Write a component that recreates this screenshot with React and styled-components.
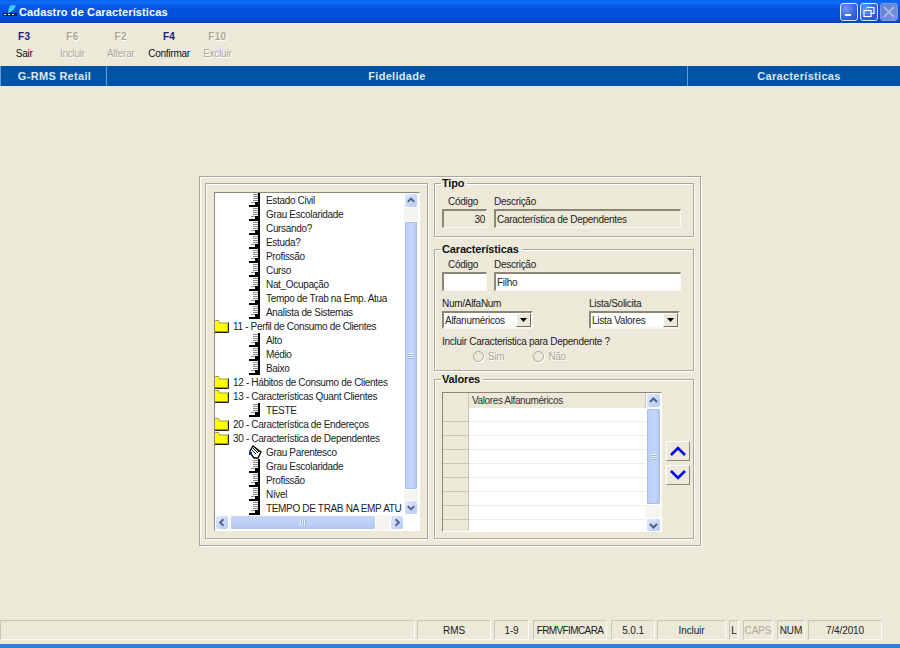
import styled, { createGlobalStyle } from 'styled-components';

const GlobalStyle = createGlobalStyle`
  html, body { margin: 0; padding: 0; height: 100%; overflow: hidden; }
  body { background: #ece9d8; font-family: "Liberation Sans", Arial, sans-serif; font-size: 10px; letter-spacing: -0.28px; color: #222; }
`;

const Window = styled.div`
  width: 900px;
  height: 648px;
  display: flex;
  flex-direction: column;
  background: #ece9d8;
`;

const TitleBar = styled.header`
  height: 23px;
  flex: none;
  display: flex;
  align-items: center;
  padding: 0 2px 0 3px;
  border-bottom: 1px solid #f4f2e8;
  background: linear-gradient(180deg, #0a5fe8 0%, #0f6cf5 10%, #0453e0 35%, #0350dc 70%, #0244c4 100%);
`;

const AppIcon = styled.svg`
  width: 14px;
  height: 14px;
  flex: none;
`;

const TitleText = styled.span`
  margin-left: 2px;
  flex: 1;
  color: #fff;
  font-size: 11px;
  font-weight: bold;
  letter-spacing: 0.12px;
`;

const WinButton = styled.button`
  width: 18px;
  height: 18px;
  padding: 0;
  margin-left: 2px;
  display: flex;
  align-items: center;
  justify-content: center;
  border: 1px solid ${(p) => (p.$off ? '#7f9be6' : '#dfe8fb')};
  border-radius: 3px;
  background: ${(p) => (p.$off
    ? 'linear-gradient(135deg, #5a7fdc, #7a93dc)'
    : 'radial-gradient(circle at 30% 30%, #6f97f0, #2a56d8 75%)')};
`;

const Toolbar = styled.nav`
  height: 42px;
  flex: none;
  display: flex;
  align-items: flex-start;
  padding-top: 7px;
  box-sizing: border-box;
`;

const ToolButton = styled.div`
  width: 48.3px;
  display: flex;
  flex-direction: column;
  align-items: center;
  gap: 5px;
  color: ${(p) => (p.$off ? '#aca899' : '#111')};
  text-shadow: ${(p) => (p.$off ? '1px 1px 0 #fff' : 'none')};
`;

const ToolKey = styled.span`
  font-size: 10px;
  line-height: 12px;
  font-weight: bold;
  letter-spacing: 0.3px;
  color: ${(p) => (p.$off ? '#aca899' : '#1c1c7c')};
`;

const ToolLabel = styled.span`
  font-size: 10px;
  line-height: 12px;
  white-space: nowrap;
  letter-spacing: -0.25px;
`;

const ModuleBand = styled.div`
  height: 20px;
  flex: none;
  display: flex;
  background: #0054a6;
  color: #dfe6ee;
  font-size: 11px;
  font-weight: bold;
  letter-spacing: 0.3px;
`;

const ModuleCell = styled.div`
  width: ${(p) => p.$w}px;
  box-sizing: border-box;
  display: flex;
  align-items: center;
  justify-content: center;
  padding-left: ${(p) => p.$pl || 0}px;
  border-left: ${(p) => (p.$first ? '1px solid #5f9ce0' : 'none')};
  border-right: ${(p) => (p.$last ? 'none' : '1px solid #5f9ce0')};
`;

const Main = styled.main`
  flex: 1;
  display: flex;
  justify-content: center;
  align-items: flex-start;
  padding-top: 90px;
`;

const Panel = styled.section`
  width: 502px;
  height: 370px;
  box-sizing: border-box;
  display: flex;
  gap: 6px;
  padding: 0 6px 0 5px;
  border: 1px solid #aca899;
  box-shadow: inset 1px 1px 0 #fff, 1px 1px 0 #fff;
`;

const TreeGroup = styled.div`
  width: 223px;
  height: 356px;
  margin-top: 6px;
  box-sizing: border-box;
  padding: 8px 8px 7px 8px;
  border: 1px solid #aca899;
  box-shadow: inset 1px 1px 0 #fff, 1px 1px 0 #fff;
`;

const TreeBox = styled.div`
  width: 206px;
  height: 339px;
  box-sizing: border-box;
  display: grid;
  grid-template-columns: 1fr 14px;
  grid-template-rows: 1fr 15px;
  background: #fff;
  border: 1px solid;
  border-color: #8a8776 #fff #fff #8a8776;
  padding-right: 1px;
`;

const TreeRows = styled.ul`
  list-style: none;
  margin: 0;
  padding: 0;
  overflow: hidden;
  min-width: 0;
`;

const TreeRow = styled.li`
  height: 14px;
  display: flex;
  align-items: center;
  padding-left: ${(p) => (p.$leaf ? 34 : 0)}px;
  white-space: nowrap;
  font-size: 10px;
  letter-spacing: -0.33px;
  color: #222;
`;

const TreeIcon = styled.svg`
  flex: none;
  width: ${(p) => (p.$folder ? 15 : 13)}px;
  height: 14px;
  margin-left: ${(p) => (p.$folder ? -1 : 0)}px;
  margin-right: 4px;
`;

const VScroll = styled.div`
  display: flex;
  flex-direction: column;
  background: #f5f5ef;
  min-height: 0;
`;

const ScrollSpacer = styled.div`
  height: ${(p) => p.$h}px;
  flex: none;
`;

const ScrollThumbV = styled.div`
  flex: ${(p) => (p.$h ? 'none' : 1)};
  height: ${(p) => (p.$h ? `${p.$h}px` : 'auto')};
  display: flex;
  align-items: center;
  justify-content: center;
  border: 1px solid #fff;
  border-radius: 2px;
  background: linear-gradient(90deg, #b9cdf6, #c6d6fa 60%, #aec3ef);
  box-shadow: 0 0 0 1px #a9bfee inset;
`;

const Grip = styled.span`
  width: 6px;
  height: 6px;
  background: repeating-linear-gradient(
    ${(p) => (p.$horizontal ? '90deg' : '180deg')},
    #eef3ff 0 1px,
    #9db4e6 1px 2px
  );
`;

const ScrollBtn = styled.div`
  flex: none;
  width: ${(p) => (p.$w ? `${p.$w}px` : '100%')};
  height: 15px;
  box-sizing: border-box;
  display: flex;
  align-items: center;
  justify-content: center;
  border: 1px solid #fff;
  border-radius: 3px;
  background: linear-gradient(135deg, #dfe8fd, #b7caf4);
`;

const Corner = styled.div`
  background: #fff;
`;

const HScroll = styled.div`
  display: flex;
  align-items: stretch;
  background: #f5f5ef;
  height: 15px;
`;

const ScrollThumbH = styled.div`
  width: 144px;
  margin-left: 1px;
  display: flex;
  align-items: center;
  justify-content: center;
  border: 1px solid #fff;
  border-radius: 2px;
  background: linear-gradient(180deg, #c6d6fa, #b9cdf6 70%, #aec3ef);
`;

const HGap = styled.div`
  flex: 1;
`;

const FormColumn = styled.div`
  width: 260px;
  display: flex;
  flex-direction: column;
`;

const Group = styled.fieldset`
  margin: 0 0 ${(p) => p.$mb || 0}px 0;
  height: ${(p) => p.$h}px;
  box-sizing: border-box;
  min-width: 0;
  padding: 0 7px;
  border: 1px solid #aca899;
  box-shadow: inset 1px 1px 0 #fff, 1px 1px 0 #fff;
`;

const GroupTitle = styled.legend`
  margin-left: -1px;
  padding: 0 3px 0 1px;
  font-size: 11px;
  line-height: 12px;
  font-weight: bold;
  color: #111;
  letter-spacing: -0.15px;
`;

const FieldRow = styled.div`
  display: flex;
  gap: ${(p) => p.$gap || 7}px;
  margin-top: ${(p) => p.$mt || 0}px;
`;

const Field = styled.label`
  width: ${(p) => p.$w}px;
  display: flex;
  flex-direction: column;
  flex: none;
`;

const FieldLabel = styled.span`
  height: 13px;
  line-height: 13px;
  padding-left: ${(p) => p.$pl || 0}px;
  font-size: 10px;
  margin-bottom: 1px;
  white-space: nowrap;
`;

const TextBox = styled.div`
  height: 19px;
  box-sizing: border-box;
  padding: 0 1px;
  display: flex;
  align-items: center;
  justify-content: ${(p) => (p.$right ? 'flex-end' : 'flex-start')};
  font-size: 10px;
  white-space: nowrap;
  border: 2px solid;
  border-right-width: 1px;
  border-bottom-width: 1px;
  border-color: #8a8776 #f8f7f0 #f8f7f0 #8a8776;
  background: ${(p) => (p.$readonly ? '#ece9d8' : '#fff')};
`;

const Combo = styled.div`
  height: 18px;
  box-sizing: border-box;
  display: flex;
  align-items: center;
  justify-content: space-between;
  padding-left: 1px;
  border: 2px solid;
  border-color: #8a8776 #f8f7f0 #f8f7f0 #8a8776;
  background: #fff;
  font-size: 10px;
`;

const ComboArrow = styled.span`
  width: 15px;
  height: 14px;
  display: flex;
  align-items: center;
  justify-content: center;
  background: #ece9d8;
  border: 1px solid;
  border-color: #fff #716f64 #716f64 #fff;
  box-sizing: border-box;
`;

const Question = styled.div`
  margin-top: 6px;
  height: 13px;
  line-height: 13px;
  font-size: 10px;
`;

const RadioRow = styled.div`
  display: flex;
  margin-top: 3px;
  padding-left: 31px;
  gap: 29px;
`;

const RadioItem = styled.span`
  display: flex;
  align-items: center;
  gap: 4px;
  color: #aca899;
  text-shadow: 1px 1px 0 #fff;
  font-size: 10px;
`;

const RadioDot = styled.span`
  width: 9px;
  height: 9px;
  border-radius: 50%;
  border: 1px solid #aca899;
  background: #ece9d8;
  box-shadow: 1px 1px 0 #fff;
`;

const ValuesRow = styled.div`
  display: flex;
  gap: 4px;
  margin-top: 7px;
`;

const ValuesGrid = styled.div`
  flex: none;
  width: 220px;
  height: 140px;
  box-sizing: border-box;
  display: grid;
  grid-template-columns: 1fr 15px;
  border: 1px solid;
  border-color: #8a8776 #fff #fff #8a8776;
  background: #fff;
  overflow: hidden;
`;

const GridTable = styled.div`
  display: flex;
  flex-direction: column;
  overflow: hidden;
`;

const GridRow = styled.div`
  display: grid;
  grid-template-columns: 26px 1fr;
  height: ${(p) => (p.$head ? 15 : 14)}px;
  flex: none;
`;

const HeadCell = styled.div`
  box-sizing: border-box;
  background: #ece9d8;
  border-bottom: 1px solid #c9c6b4;
  border-right: 1px solid #c9c6b4;
  padding-left: 3px;
  line-height: 15px;
  font-size: 10px;
  letter-spacing: -0.38px;
  white-space: nowrap;
  color: #333;
`;

const BodyCell = styled.div`
  box-sizing: border-box;
  background: #fff;
  border-bottom: 1px solid #efeee6;
`;

const MoveButtons = styled.div`
  flex: none;
  display: flex;
  flex-direction: column;
  gap: 4px;
  padding-top: 49px;
`;

const MoveButton = styled.div`
  width: 24px;
  height: 20px;
  box-sizing: border-box;
  display: flex;
  align-items: center;
  justify-content: center;
  border: 1px solid;
  border-color: #fff #8a8776 #8a8776 #fff;
  background: #ece9d8;
`;

const StatusBar = styled.footer`
  height: 20px;
  flex: none;
  display: flex;
  gap: 2px;
  margin-bottom: 4px;
`;

const StatusCell = styled.div`
  width: ${(p) => p.$w}px;
  margin-left: ${(p) => p.$ml || 0}px;
  box-sizing: border-box;
  display: flex;
  align-items: center;
  justify-content: center;
  font-size: 10px;
  letter-spacing: ${(p) => (p.$tight ? -0.6 : -0.1)}px;
  white-space: nowrap;
  color: ${(p) => (p.$off ? '#aca899' : '#222')};
  border: 1px solid;
  border-color: #c9c6b4 #fbfaf4 #fbfaf4 #c9c6b4;
`;

const BottomEdge = styled.div`
  height: 4px;
  flex: none;
  background: #2f7fe2;
`;

const LeafIcon = () => (
  <TreeIcon viewBox="0 0 13 14">
    <path d="M9 0h2v14H9z" fill="#000" />
    <path d="M0 12h11v2H0z" fill="#000" />
    <path d="M4 1.5h5M4 3.5h5M4 5.5h5M4 7.5h5" stroke="#8a8a8a" strokeWidth="1" fill="none" />
    <path d="M6 9h3v3H6z" fill="#000" />
    <path d="M2 9.5h4" stroke="#8a8a8a" strokeWidth="1" fill="none" />
  </TreeIcon>
);

const HandIcon = () => (
  <TreeIcon viewBox="0 0 13 14">
    <path d="M1 6l3-5 8 6-3 6H5L2 9z" fill="#fff" stroke="#000" strokeWidth="1.3" />
    <path d="M4 3l5 5M3 5l4 4M6 2l4 5" stroke="#000" strokeWidth="1" fill="none" />
    <path d="M0 7h3v3H0z" fill="#0a2fb0" />
  </TreeIcon>
);

const FolderIcon = () => (
  <TreeIcon $folder viewBox="0 0 15 14">
    <path d="M0.5 4V2.5l1-1h3l1 2.5h8.5v8.5H0.5z" fill="#ffff00" stroke="#9a9a30" strokeWidth="1" />
    <path d="M14.5 3.5v10H1" fill="none" stroke="#222" strokeWidth="1" />
  </TreeIcon>
);

const Chevron = ({ dir }) => {
  const paths = {
    up: 'M3 8l3.5-3.5L10 8',
    down: 'M3 5l3.5 3.5L10 5',
    left: 'M8 3L4.5 6.5 8 10',
    right: 'M5 3l3.5 3.5L5 10',
  };
  return (
    <svg width="13" height="13" viewBox="0 0 13 13">
      <path d={paths[dir]} fill="none" stroke="#4d6185" strokeWidth="2" />
    </svg>
  );
};

const ComboCaret = () => (
  <svg width="7" height="4" viewBox="0 0 7 4"><path d="M0 0h7L3.5 4z" fill="#000" /></svg>
);

const BlueArrow = ({ down }) => (
  <svg width="18" height="12" viewBox="0 0 18 12">
    <path
      d={down ? 'M2 2l7 7 7-7' : 'M2 10l7-7 7 7'}
      fill="none"
      stroke="#0000e6"
      strokeWidth="2.6"
    />
  </svg>
);

const toolButtons = [
  { key: 'F3', label: 'Sair' },
  { key: 'F6', label: 'Incluir', off: true },
  { key: 'F2', label: 'Alterar', off: true },
  { key: 'F4', label: 'Confirmar' },
  { key: 'F10', label: 'Excluir', off: true },
];

const treeRows = [
  { text: 'Estado Civil' },
  { text: 'Grau Escolaridade' },
  { text: 'Cursando?' },
  { text: 'Estuda?' },
  { text: 'Profissão' },
  { text: 'Curso' },
  { text: 'Nat_Ocupação' },
  { text: 'Tempo de Trab na Emp. Atua' },
  { text: 'Analista de Sistemas' },
  { text: '11 - Perfil de Consumo de Clientes', folder: true },
  { text: 'Alto' },
  { text: 'Médio' },
  { text: 'Baixo' },
  { text: '12 - Hábitos de Consumo de Clientes', folder: true },
  { text: '13 - Características Quant Clientes', folder: true },
  { text: 'TESTE' },
  { text: '20 - Característica de Endereços', folder: true },
  { text: '30 - Característica de Dependentes', folder: true },
  { text: 'Grau Parentesco', hand: true },
  { text: 'Grau Escolaridade' },
  { text: 'Profissão' },
  { text: 'Nível' },
  { text: 'TEMPO DE TRAB NA EMP ATU' },
];

const statusCells = [
  { w: 415, text: '' },
  { w: 74, text: 'RMS' },
  { w: 35, text: '1-9', ml: 1 },
  { w: 74, text: 'FRMVFIMCARA', ml: 2, tight: true },
  { w: 44, text: '5.0.1', ml: 2 },
  { w: 69, text: 'Incluir' },
  { w: 10, text: 'L', ml: 1 },
  { w: 30, text: 'CAPS', ml: 2, off: true },
  { w: 28, text: 'NUM', ml: 2 },
  { w: 74, text: '7/4/2010', ml: 1 },
];

const App = () => (
  <Window>
    <GlobalStyle />
    <TitleBar>
      <AppIcon viewBox="0 0 14 14">
        <path d="M8 0c2 0 4 1 5 0-1 4-4 7-8 8 0-3 1-6 3-8z" fill="#39d0e8" />
        <path d="M0 8h14v3H0z" fill="#10205a" />
        <path d="M1 9.5h2M5 9.5h2M9 9.5h2" stroke="#fff" strokeWidth="1" />
      </AppIcon>
      <TitleText>Cadastro de Características</TitleText>
      <WinButton aria-label="Minimizar">
        <svg width="10" height="10" viewBox="0 0 10 10"><path d="M1 7h6v2H1z" fill="#fff" /></svg>
      </WinButton>
      <WinButton aria-label="Restaurar">
        <svg width="12" height="12" viewBox="0 0 12 12">
          <path d="M4 1.5h7v6H8M1 4.5h7v6H1z" fill="none" stroke="#fff" strokeWidth="1.2" />
        </svg>
      </WinButton>
      <WinButton $off aria-label="Fechar">
        <svg width="12" height="12" viewBox="0 0 12 12">
          <path d="M1 1l10 10M11 1L1 11" stroke="#a9b6dd" strokeWidth="2" />
        </svg>
      </WinButton>
    </TitleBar>

    <Toolbar>
      {toolButtons.map((b) => (
        <ToolButton key={b.key} $off={b.off}>
          <ToolKey $off={b.off}>{b.key}</ToolKey>
          <ToolLabel>{b.label}</ToolLabel>
        </ToolButton>
      ))}
    </Toolbar>

    <ModuleBand>
      <ModuleCell $w={107} $first $pl={2}>G-RMS Retail</ModuleCell>
      <ModuleCell $w={581}>Fidelidade</ModuleCell>
      <ModuleCell $w={212} $last $pl={10}>Características</ModuleCell>
    </ModuleBand>

    <Main>
      <Panel>
        <TreeGroup>
          <TreeBox>
            <TreeRows>
              {treeRows.map((r, i) => (
                <TreeRow key={i} $leaf={!r.folder}>
                  {r.folder ? <FolderIcon /> : r.hand ? <HandIcon /> : <LeafIcon />}
                  {r.text}
                </TreeRow>
              ))}
            </TreeRows>
            <VScroll>
              <ScrollBtn><Chevron dir="up" /></ScrollBtn>
              <ScrollSpacer $h={13} />
              <ScrollThumbV>
                <Grip />
              </ScrollThumbV>
              <ScrollSpacer $h={10} />
              <ScrollBtn><Chevron dir="down" /></ScrollBtn>
            </VScroll>
            <HScroll>
              <ScrollBtn $w={14}><Chevron dir="left" /></ScrollBtn>
              <ScrollThumbH><Grip $horizontal /></ScrollThumbH>
              <HGap />
              <ScrollBtn $w={14}><Chevron dir="right" /></ScrollBtn>
            </HScroll>
            <Corner />
          </TreeBox>
        </TreeGroup>

        <FormColumn>
          <Group $h={60} $mb={6}>
            <GroupTitle>Tipo</GroupTitle>
            <FieldRow $mt={6}>
              <Field $w={45}>
                <FieldLabel $pl={6}>Código</FieldLabel>
                <TextBox $readonly $right>30</TextBox>
              </Field>
              <Field $w={187}>
                <FieldLabel>Descrição</FieldLabel>
                <TextBox $readonly>Característica de Dependentes</TextBox>
              </Field>
            </FieldRow>
          </Group>

          <Group $h={128} $mb={2}>
            <GroupTitle>Características</GroupTitle>
            <FieldRow $mt={3}>
              <Field $w={45}>
                <FieldLabel $pl={6}>Código</FieldLabel>
                <TextBox />
              </Field>
              <Field $w={187}>
                <FieldLabel>Descrição</FieldLabel>
                <TextBox>Filho</TextBox>
              </Field>
            </FieldRow>
            <FieldRow $gap={56} $mt={6}>
              <Field $w={91}>
                <FieldLabel>Num/AlfaNum</FieldLabel>
                <Combo>Alfanuméricos<ComboArrow><ComboCaret /></ComboArrow></Combo>
              </Field>
              <Field $w={91}>
                <FieldLabel>Lista/Solicita</FieldLabel>
                <Combo>Lista Valores<ComboArrow><ComboCaret /></ComboArrow></Combo>
              </Field>
            </FieldRow>
            <Question>Incluir Caracteristica para Dependente ?</Question>
            <RadioRow>
              <RadioItem><RadioDot />Sim</RadioItem>
              <RadioItem><RadioDot />Não</RadioItem>
            </RadioRow>
          </Group>

          <Group $h={166}>
            <GroupTitle>Valores</GroupTitle>
            <ValuesRow>
              <ValuesGrid>
                <GridTable>
                  <GridRow $head>
                    <HeadCell />
                    <HeadCell>Valores Alfanuméricos</HeadCell>
                  </GridRow>
                  {Array.from({ length: 9 }, (_, i) => (
                    <GridRow key={i}>
                      <HeadCell />
                      <BodyCell />
                    </GridRow>
                  ))}
                </GridTable>
                <VScroll>
                  <ScrollBtn><Chevron dir="up" /></ScrollBtn>
                  <ScrollThumbV $h={95}><Grip /></ScrollThumbV>
                  <ScrollSpacer $h={13} />
                  <ScrollBtn><Chevron dir="down" /></ScrollBtn>
                </VScroll>
              </ValuesGrid>
              <MoveButtons>
                <MoveButton><BlueArrow /></MoveButton>
                <MoveButton><BlueArrow down /></MoveButton>
              </MoveButtons>
            </ValuesRow>
          </Group>
        </FormColumn>
      </Panel>
    </Main>

    <StatusBar>
      {statusCells.map((c, i) => (
        <StatusCell key={i} $w={c.w} $ml={c.ml} $off={c.off} $tight={c.tight}>{c.text}</StatusCell>
      ))}
    </StatusBar>
    <BottomEdge />
  </Window>
);

export default App;
